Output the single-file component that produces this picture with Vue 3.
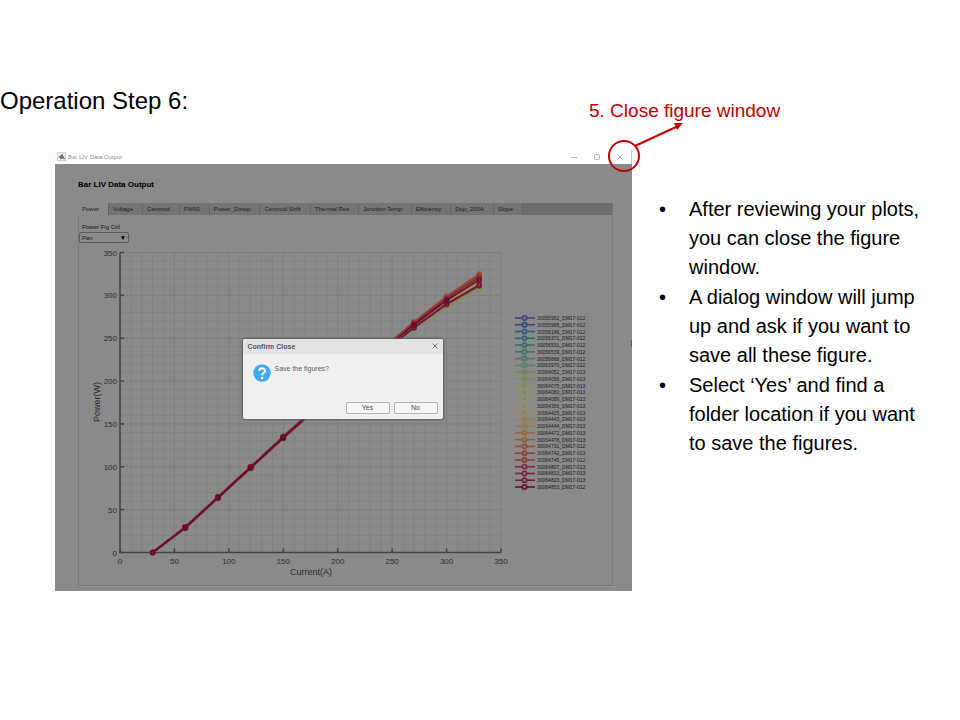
<script setup>
import { ref } from 'vue'

const tabs = [
  'Power', 'Voltage', 'Centroid', 'FW90', 'Power_Dissip', 'Centroid Shift',
  'Thermal Res', 'Junction Temp', 'Efficiency', 'Dop_200A', 'Slope',
]
const activeTab = ref('Power')
const mode = ref('Pan')

const steps = [
  'After reviewing your plots, you can close the figure window.',
  'A dialog window will jump up and ask if you want to save all these figure.',
  'Select ‘Yes’ and find a folder location if you want to save the figures.',
]

/* Plot area inside the chart's viewBox */
const plot = { left: 41, top: 9.5, right: 422, bottom: 309.5 }
const px = (a) => plot.left + (a * (plot.right - plot.left)) / 350
const py = (w) => plot.bottom - (w * (plot.bottom - plot.top)) / 350

const major = Array.from({ length: 8 }, (_, i) => i * 50)
const minor = Array.from({ length: 35 }, (_, i) => i * 10).filter((v) => v % 50)

const names = [
  ['30055952_DM17-012', '#4a3f7c'], ['30055985_DM17-012', '#344a80'],
  ['30056196_DM17-012', '#2a5a80'], ['30056371_DM17-012', '#2c6878'],
  ['30056531_DM17-012', '#34716e'], ['30056539_DM17-012', '#3f7663'],
  ['30056868_DM17-012', '#4c7a60'], ['30063970_DM17-012', '#5f8261'],
  ['30064052_DM17-013', '#6d8a60'], ['30064056_DM17-013', '#7e8f58'],
  ['30064075_DM17-013', '#87905a'], ['30064080_DM17-013', '#8d915d'],
  ['30064089_DM17-013', '#929263'], ['30064366_DM17-013', '#969063'],
  ['30064425_DM17-013', '#988a55'], ['30064443_DM17-013', '#98834c'],
  ['30064444_DM17-013', '#987843'], ['30064472_DM17-013', '#966a37'],
  ['30064478_DM17-013', '#955f37'], ['30064731_DM17-012', '#954f33'],
  ['30064742_DM17-013', '#934033'], ['30064745_DM17-012', '#8f3838'],
  ['30064807_DM17-013', '#88293a'], ['30064813_DM17-013', '#7d2140'],
  ['30064823_DM17-013', '#741a3d'], ['30064853_DM17-012', '#680b30'],
]

const base = [
  [30, 0, 0], [60, 29, 0.1], [90, 64, 0.1], [120, 99, 0.12], [150, 134, 0.15],
  [180, 168, 0.2], [210, 201, 0.3], [240, 233, 0.4], [270, 264, 0.5],
  [300, 292, 0.7], [330, 315, 1],
]
const offsets = [
  6, 8, 5, -3, -6, -5, -5, -4, -6, -8, -7, 0, 2, 1, -1, 3,
  5, 7, 9, 10, 8, -4, 6, -3, -3, 3,
]
const series = names.map(([name, color], i) => ({
  name,
  color,
  points: base.map(([a, w, k]) => [px(a), py(w + offsets[i] * k)]),
}))
const legendY = (i) => 76 + (i * 169) / 25
</script>

<template>
  <main class="slide">
    <h1 class="slide-title">Operation Step 6:</h1>

    <div class="content">
      <section class="window">
        <header class="titlebar">
          <svg class="app-icon" viewBox="0 0 16 16" aria-hidden="true">
            <rect x=".5" y=".5" width="15" height="15" fill="#e8edf3" stroke="#aebbc8" />
            <path d="M2 9l4-2 3-4 2 4 3 6-4-2-3 2-2-3z" fill="#3d6594" />
            <path d="M9 3l2 4 3 6-4-2-3 2 1-5z" fill="#c4552d" />
          </svg>
          <span class="window-name">Bar LIV Data Output</span>
          <div class="controls">
            <button type="button" aria-label="Minimize">
              <svg viewBox="0 0 6 6"><path d="M0 3.5h6" /></svg>
            </button>
            <button type="button" aria-label="Maximize">
              <svg viewBox="0 0 6 6"><rect x=".5" y=".5" width="5" height="5" rx="1" /></svg>
            </button>
            <button type="button" aria-label="Close">
              <svg viewBox="0 0 6 6"><path d="M.5.5l5 5M5.500.5l-5 5" /></svg>
            </button>
          </div>
        </header>

        <div class="body">
          <h2 class="heading">Bar LIV Data Output</h2>
          <nav class="tabs">
            <button
              v-for="tab in tabs"
              :key="tab"
              type="button"
              class="tab"
              :class="{ active: tab === activeTab }"
              @click="activeTab = tab"
            >{{ tab }}</button>
          </nav>

          <div class="panel">
            <label class="ctrl-label" for="fig-ctrl">Power Fig Ctrl</label>
            <div class="ctrl">
              <select id="fig-ctrl" v-model="mode">
                <option>Pan</option>
                <option>Zoom</option>
              </select>
              <svg class="caret" viewBox="0 0 6 5" aria-hidden="true"><path d="M0 0h6L3 5z" /></svg>
            </div>

            <svg class="chart" viewBox="0 0 533 342" role="img" aria-label="Power against current">
              <g class="minor">
                <path v-for="v in minor" :key="'x' + v" :d="`M${px(v)} ${plot.top}V${plot.bottom}`" />
                <path v-for="v in minor" :key="'y' + v" :d="`M${plot.left} ${py(v)}H${plot.right}`" />
              </g>
              <g class="major">
                <path v-for="v in major" :key="'x' + v" :d="`M${px(v)} ${plot.top}V${plot.bottom}`" />
                <path v-for="v in major" :key="'y' + v" :d="`M${plot.left} ${py(v)}H${plot.right}`" />
              </g>
              <g class="axis">
                <path :d="`M${plot.left} ${plot.top}V${plot.bottom}H${plot.right}`" />
                <path v-for="v in major" :key="'x' + v" :d="`M${px(v)} ${plot.bottom}v-4`" />
                <path v-for="v in major" :key="'y' + v" :d="`M${plot.left} ${py(v)}h4`" />
              </g>
              <g class="ticks">
                <text v-for="v in major" :key="'x' + v" :x="px(v)" y="321" text-anchor="middle">{{ v }}</text>
                <text v-for="v in major" :key="'y' + v" x="38" :y="py(v) + 3" text-anchor="end">{{ v }}</text>
              </g>
              <text class="axis-label" x="232" y="332" text-anchor="middle">Current(A)</text>
              <text class="axis-label" transform="translate(21 159) rotate(-90)" text-anchor="middle">Power(W)</text>

              <g v-for="s in series" :key="s.name" :stroke="s.color" fill="none">
                <polyline :points="s.points.map((p) => p.join(',')).join(' ')" stroke-width="1.6" />
                <circle v-for="(p, j) in s.points" :key="j" :cx="p[0]" :cy="p[1]" r="2" stroke-width="1.6" />
              </g>

              <g v-for="(s, i) in series" :key="'l' + s.name">
                <path :d="`M436 ${legendY(i) - 1}h20`" :stroke="s.color" stroke-width="1.6" />
                <circle cx="445.500" :cy="legendY(i) - 1" r="2.200" fill="#7c7c7c" :stroke="s.color" stroke-width="1.6" />
                <text class="legend" x="458" :y="legendY(i) + 1">{{ s.name }}</text>
              </g>
            </svg>
          </div>

          <div class="overlay">
            <div class="dialog" role="dialog" aria-labelledby="dialog-title">
              <header class="dialog-head">
                <span id="dialog-title">Confirm Close</span>
                <button type="button" class="dialog-close" aria-label="Close dialog">
                  <svg viewBox="0 0 6 6"><path d="M.5.5l5 5M5.500.5l-5 5" /></svg>
                </button>
              </header>
              <div class="dialog-body">
                <svg class="question" viewBox="0 0 18 18" aria-hidden="true">
                  <circle cx="9" cy="9" r="8.7" fill="#45a9ef" />
                  <path d="M6.2 7c0-3.6 5.8-3.4 5.8-.3C12 8.900 9.200 8.800 9.200 11.300" fill="none" stroke="#fff" stroke-width="2" />
                  <circle cx="9.200" cy="14" r="1.300" fill="#fff" />
                </svg>
                <p>Save the figures?</p>
              </div>
              <footer class="dialog-actions">
                <button type="button">Yes</button>
                <button type="button">No</button>
              </footer>
            </div>
          </div>
        </div>

        <div class="callout">
          <p>5. Close figure window</p>
          <svg viewBox="0 0 80 52" aria-hidden="true">
            <circle cx="18" cy="34" r="15" fill="none" stroke="#c00000" stroke-width="2" />
            <path d="M29 24L70 5" stroke="#c00000" stroke-width="2" />
            <path d="M77 1l-9 0 3 7z" fill="#c00000" />
          </svg>
        </div>
      </section>

      <ul class="steps">
        <li v-for="step in steps" :key="step">{{ step }}</li>
      </ul>
    </div>
  </main>
</template>

<style>
body {
  background: #fff;
}
</style>

<style scoped>
.slide {
  padding-top: 86px;
  font-family: "Liberation Sans", Arial, sans-serif;
  color: #000;
}
h1, h2, p, ul {
  margin: 0;
  padding: 0;
}
button, select {
  font-family: inherit;
  margin: 0;
  padding: 0;
  border: 0;
  background: none;
  color: inherit;
}
svg {
  display: block;
}
.slide-title {
  font-size: 24px;
  line-height: 30px;
  font-weight: 400;
}
.content {
  display: grid;
  grid-template-columns: minmax(0, 1fr) 328px;
  padding: 34px 0 0 55px;
  align-items: start;
}
.window {
  position: relative;
}
.titlebar {
  display: flex;
  align-items: center;
  gap: 2px;
  height: 14px;
  padding: 0 8px 1px 2px;
  box-sizing: border-box;
  border-right: 1px solid #c8c8c8;
  font-size: 6px;
  color: #8c8c8c;
}
.app-icon {
  width: 9px;
  height: 9px;
}
.controls {
  display: flex;
  gap: 17px;
  margin-left: auto;
}
.controls svg, .dialog-close svg {
  width: 6px;
  height: 6px;
  fill: none;
  stroke: #aaa;
  stroke-width: 1;
}
.body {
  position: relative;
  padding: 14px 19px 5px 23px;
  background: #8a8a8a;
}
.body::after {
  content: "";
  position: absolute;
  top: 176px;
  right: 0;
  width: 1px;
  height: 7px;
  background: #8c4a4c;
}
.heading {
  font-size: 8px;
  line-height: 14px;
  margin-bottom: 11px;
}
.tabs {
  display: flex;
  height: 12px;
  background: #6e6e6e;
}
.tab {
  padding: 0 9px 0 4px;
  font-size: 6px;
  line-height: 12px;
  color: #1c1c1c;
  background: #747474;
  border-right: 1px solid #666;
}
.tab.active {
  background: #8a8a8a;
}
.panel {
  padding-top: 7px;
  border: 1px solid #7b7b7b;
  border-top: 0;
}
.ctrl-label {
  display: block;
  padding-left: 3px;
  font-size: 6px;
  line-height: 10px;
  color: #161616;
}
.ctrl {
  position: relative;
  width: 50px;
  height: 11px;
}
.ctrl select {
  display: block;
  width: 100%;
  height: 100%;
  padding-left: 2px;
  appearance: none;
  border: 1px solid #5c5c5c;
  border-radius: 2px;
  font-size: 6px;
  color: #161616;
}
.caret {
  position: absolute;
  right: 4px;
  top: 4px;
  width: 4px;
  height: 4px;
}
.chart {
  width: 100%;
  height: auto;
}
.minor path {
  stroke: #7b7b7b;
  stroke-dasharray: 1 1;
}
.major path {
  stroke: #7e7e7e;
}
.axis path {
  fill: none;
  stroke: #444;
  stroke-width: 1.5;
}
.ticks text {
  font-size: 8px;
  fill: #2e2e2e;
}
.axis-label {
  font-size: 9px;
  fill: #2a2a2a;
}
.legend {
  font-size: 5px;
  fill: #1a1a1a;
}
.overlay {
  position: absolute;
  inset: 0;
  display: flex;
  align-items: center;
  justify-content: center;
  padding: 2px 2px 0 0;
}
.dialog {
  width: 200px;
  border-radius: 2px;
  background: #f0f0f0;
  box-shadow: 0 0 2px 1px #5c5c5c;
  overflow: hidden;
}
.dialog-head {
  display: flex;
  align-items: center;
  justify-content: space-between;
  height: 15px;
  padding: 0 5px;
  background: #e3e3e3;
  font-size: 7px;
  font-weight: 700;
  color: #555;
}
.dialog-close svg {
  stroke: #777;
}
.dialog-body {
  display: flex;
  gap: 4px;
  padding: 10px 10px 20px;
  font-size: 7px;
  line-height: 9px;
  color: #606060;
}
.question {
  width: 18px;
  height: 18px;
}
.dialog-actions {
  display: flex;
  justify-content: flex-end;
  gap: 4px;
  padding: 0 5px 5px;
}
.dialog-actions button {
  width: 44px;
  height: 12px;
  border: 1px solid #b4b4b4;
  border-radius: 2px;
  background: #f6f6f6;
  font-size: 7px;
  line-height: 10px;
  color: #444;
}
.callout {
  position: absolute;
  top: -50px;
  left: calc(100% - 43px);
  color: #c00000;
  pointer-events: none;
}
.callout p {
  font-size: 19px;
  line-height: 22px;
  white-space: nowrap;
}
.callout svg {
  width: 80px;
  height: 52px;
  margin-left: 17px;
}
.steps {
  display: flex;
  flex-direction: column;
  gap: 1px;
  padding: 45px 24px 0 57px;
  list-style: none;
  font-size: 20px;
  line-height: 29px;
}
.steps li {
  position: relative;
}
.steps li::before {
  content: "•";
  position: absolute;
  left: -30px;
}
</style>
